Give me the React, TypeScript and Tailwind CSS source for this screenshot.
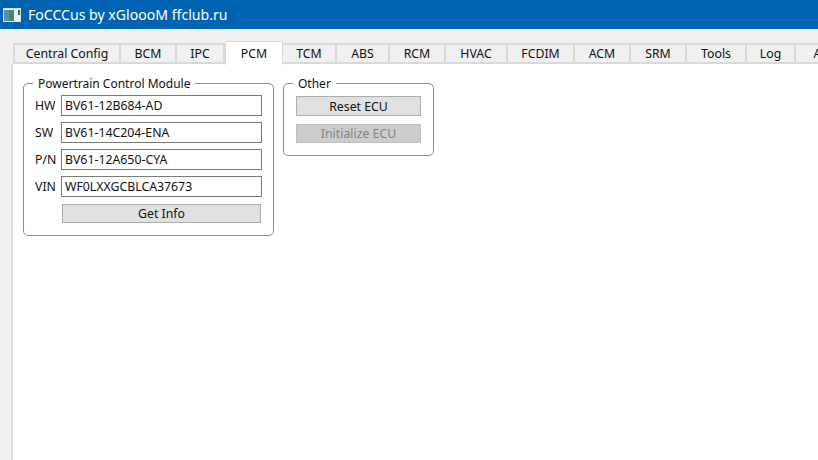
import React from 'react';

// Tab strip, widths measured from the window
const tabs = [
  { label: 'Central Config', w: 'w-[108px]' },
  { label: 'BCM', w: 'w-[56px]' },
  { label: 'IPC', w: 'w-[48px]' },
  { label: 'PCM', w: 'w-[58px]', active: true },
  { label: 'TCM', w: 'w-[54px]' },
  { label: 'ABS', w: 'w-[53px]' },
  { label: 'RCM', w: 'w-[56px]' },
  { label: 'HVAC', w: 'w-[62px]' },
  { label: 'FCDIM', w: 'w-[67px]' },
  { label: 'ACM', w: 'w-[56px]' },
  { label: 'SRM', w: 'w-[56px]' },
  { label: 'Tools', w: 'w-[60px]' },
  { label: 'Log', w: 'w-[49px]' },
  { label: 'About', w: 'w-[72px]' },
];

const fields = [
  { label: 'HW', value: 'BV61-12B684-AD' },
  { label: 'SW', value: 'BV61-14C204-ENA' },
  { label: 'P/N', value: 'BV61-12A650-CYA' },
  { label: 'VIN', value: 'WF0LXXGCBLCA37673' },
];

function AppIcon() {
  return (
    <svg width="18" height="14" viewBox="0 0 18 14" className="shrink-0">
      <rect x="0" y="0" width="18" height="14" fill="#d8e0e0" />
      <rect x="1" y="1" width="16" height="12" fill="#eef2f0" />
      <rect x="1" y="2" width="10" height="11" fill="#3d8a78" />
      <rect x="1" y="2" width="5" height="11" fill="#5f8fa8" />
      <rect x="15" y="2" width="2" height="5" fill="#2f6f60" />
    </svg>
  );
}

export default function App() {
  return (
    <div className="w-[818px] h-[460px] overflow-hidden flex flex-col bg-[#f0f0f0] text-[12.3px] text-[#111] font-['Noto_Sans',sans-serif]">
      {/* Title bar */}
      <div className="h-[29px] shrink-0 bg-[#0063b1] flex items-center pl-[3px] gap-[7px] text-white text-[14.1px]">
        <AppIcon />
        <span>FoCCCus by xGloooM ffclub.ru</span>
      </div>

      {/* Tabs */}
      <div className="flex pl-[13px] pt-[14px] h-[35px] shrink-0 whitespace-nowrap">
        {tabs.map((t) => (
          <div
            key={t.label}
            className={
              t.active
                ? `${t.w} shrink-0 h-[24px] -mt-[2px] pt-[1px] z-10 bg-white border border-b-0 border-[#d9d9d9] flex items-center justify-center`
                : `${t.w} shrink-0 h-[21px] pt-[1px] bg-[#f0f0f0] border-t-2 border-r-2 border-b-2 border-[#d9d9d9] first:border-l-2 flex items-center justify-center`
            }
          >
            {t.label}
          </div>
        ))}
      </div>

      {/* Tab pane */}
      <div className="flex-1 ml-[11px] bg-white border-l-2 border-[#d9d9d9] pl-[10px] pt-[12px] flex items-start gap-[9px]">
        <fieldset className="w-[251px] h-[160px] border border-[#8c8c8c] rounded-[5px] pl-[37px] pr-[11px]">
          <legend className="ml-[-28px] px-[5px] leading-[15px] text-[12px]">Powertrain Control Module</legend>
          <div className="flex flex-col gap-[6px] pt-[4px]">
            {fields.map((f) => (
              <div key={f.label} className="flex items-center -ml-[26px]">
                <span className="w-[26px] pt-[2px] text-left shrink-0">{f.label}</span>
                <div className="w-[201px] h-[21px] pt-[2px] border border-[#7a7a7a] bg-white pl-[3px] flex items-center">
                  {f.value}
                </div>
              </div>
            ))}
          </div>
          <div className="ml-[1px] mt-[7px] pt-[2px] w-[199px] h-[19px] bg-[#e1e1e1] border border-[#adadad] flex items-center justify-center">
            Get Info
          </div>
        </fieldset>

        <fieldset className="w-[151px] h-[80px] border border-[#8c8c8c] rounded-[5px] px-[12px]">
          <legend className="ml-[-3px] px-[5px] leading-[15px] text-[12px]">Other</legend>
          <div className="mt-[5px] pt-[2px] h-[20px] bg-[#e1e1e1] border border-[#adadad] flex items-center justify-center">
            Reset ECU
          </div>
          <div className="mt-[8px] pt-[2px] h-[19px] bg-[#cccccc] border border-[#bfbfbf] text-[#838383] flex items-center justify-center">
            Initialize ECU
          </div>
        </fieldset>
      </div>
    </div>
  );
}
